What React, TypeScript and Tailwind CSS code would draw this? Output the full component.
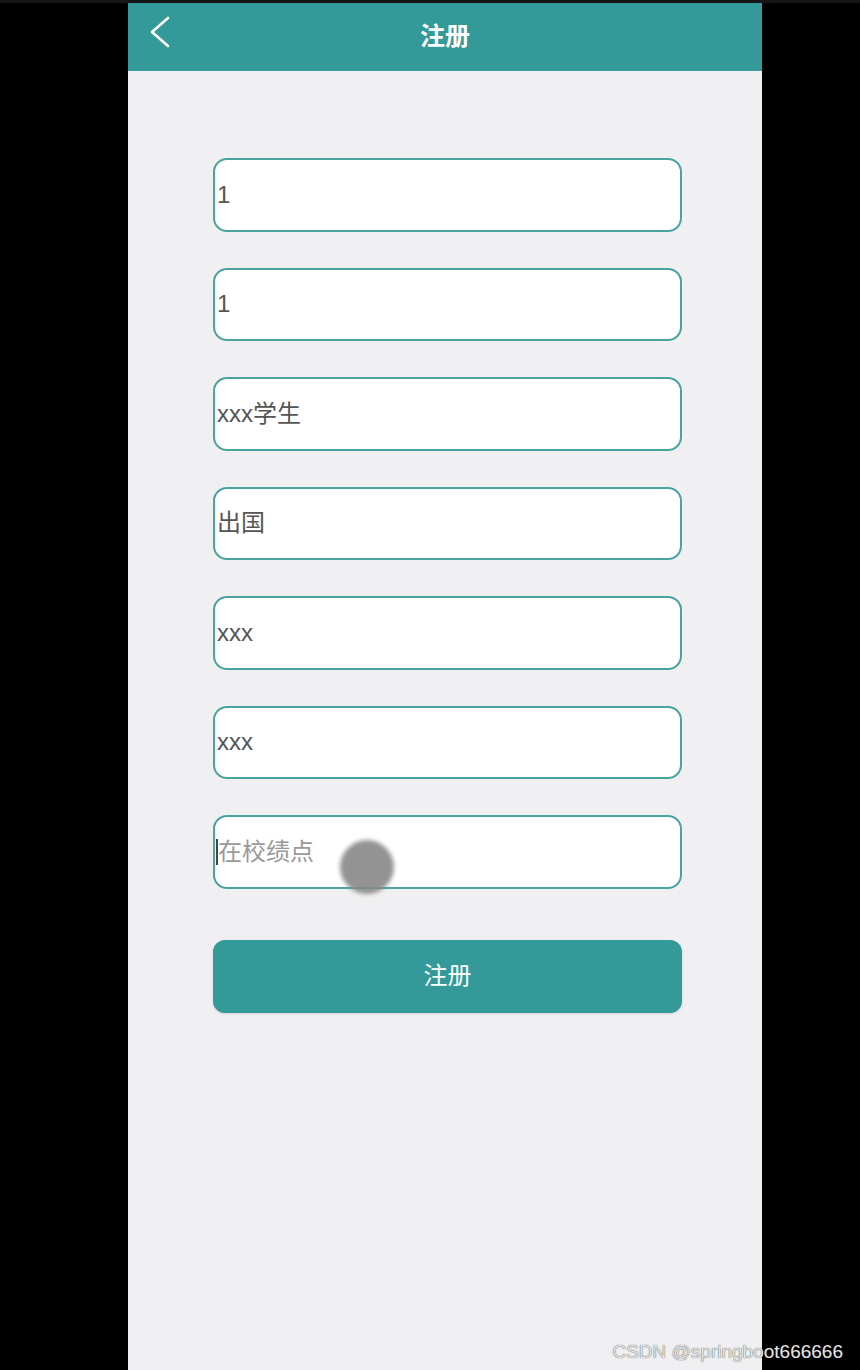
const FIELDS = ["1", "1", "xxx学生", "出国", "xxx", "xxx"];

export default function App() {
  return (
    <div className="relative h-[1370px] w-full bg-black flex flex-col font-['Liberation_Sans','Noto_Sans_CJK_SC',sans-serif]">
      <div className="h-[3px] flex-none bg-[#161616]" />
      <div className="ml-[128px] flex w-[634px] flex-1 flex-col bg-[#f0f0f2]">
        {/* header */}
        <div className="relative flex h-[68px] flex-none items-center justify-center bg-[#339999]">
          <svg className="absolute left-[20px] top-[12px]" width="24" height="34" viewBox="0 0 24 34" fill="none" stroke="white" strokeWidth="2.6" strokeLinecap="round" strokeLinejoin="round">
            <polyline points="20,3 4,17 20,31" />
          </svg>
          <span className="text-[25px] font-bold text-white">注册</span>
        </div>

        {/* form */}
        <div className="flex flex-col gap-[36px] pl-[85px] pr-[80px] pt-[87px]">
          {FIELDS.map((v, i) => (
            <div
              key={i}
              className="flex h-[73.5px] items-center rounded-[14px] border-[2.5px] border-[#4aa39f] bg-white pl-[2px] text-[24px] text-[#555]"
            >
              {v}
            </div>
          ))}
          <div className="relative flex h-[73.5px] items-center rounded-[14px] border-[2.5px] border-[#4aa39f] bg-white pl-[1px] text-[24px] text-[#999]">
            <span className="h-[26px] w-[2px] bg-[#444]" />
            <span>在校绩点</span>
            <span className="absolute left-[125px] top-[23px] h-[54px] w-[54px] rounded-full bg-[#888] opacity-90 blur-[2px]" />
          </div>
          <button className="mt-[15px] h-[73px] rounded-[12px] bg-[#339999] text-[24px] text-white shadow-sm">
            注册
          </button>
        </div>
      </div>
      <span className="absolute right-[17px] top-[1338px] text-[19px] text-[#e4e4e4] [text-shadow:0_0_1px_#222]">
        CSDN @springboot666666
      </span>
    </div>
  );
}
